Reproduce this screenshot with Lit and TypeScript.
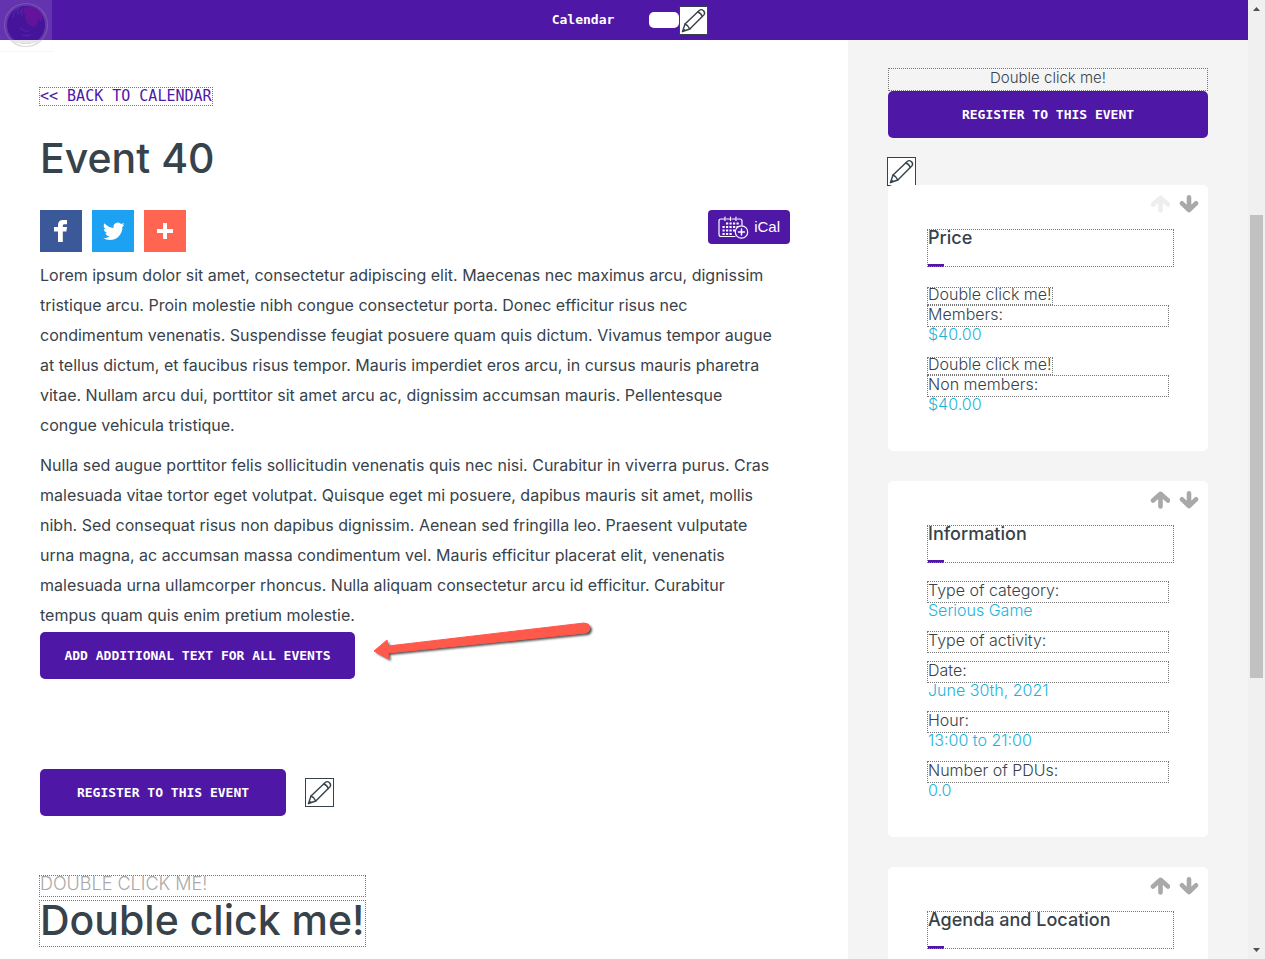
import { LitElement, html, css, svg } from "lit";
import { customElement, property } from "lit/decorators.js";

const pencil = svg`<svg viewBox="0 0 27 27" width="27" height="27" fill="none" stroke="#37424a" stroke-width="1.400" stroke-linejoin="round" stroke-linecap="round">
  <path d="M2.500 24.500L5 17L19.500 3.200Q21.300 1.800 23.500 3.700Q25.500 6 24 7.800L9.800 22Z"/>
  <path d="M5 17Q8.300 18.300 9.800 22M17.800 5Q21 6 22.300 9.500M2.500 24.500L4.500 22.700"/></svg>`;

@customElement("edit-button")
class EditButton extends LitElement {
  static styles = css`
    :host { display: block; flex: none; }
    .edit { display: grid; place-items: center; box-sizing: border-box; width: 29px; height: 29px; padding: 0; border: 1px solid #37424a; background: #fff; cursor: pointer; }
  `;
  render() {
    return html`<button class="edit" type="button" aria-label="Edit">${pencil}</button>`;
  }
}

interface Row { hint?: string; label: string; value?: string; }

@customElement("info-card")
class InfoCard extends LitElement {
  @property() heading = "";
  @property({ type: Boolean }) first = false;
  @property({ attribute: false }) rows: Row[] = [];

  static styles = css`
    :host { display: block; position: relative; background: #fff; border-radius: 5px; padding: 45px 40px 35px; }
    .moves { position: absolute; top: 10px; right: 9px; display: flex; gap: 9px; }
    .move { display: block; width: 20px; height: 18px; padding: 0; border: 0; background: none; color: #a9a9a9; }
    .move:disabled { color: #eee; }
    .title { box-sizing: border-box; height: 36px; margin: 0 -5px 20px 0; font-size: 18px; line-height: 16px; font-weight: 500; outline: 1px dotted #777; display: flex; flex-direction: column; justify-content: space-between; }
    .title::after { content: ""; width: 16px; height: 3px; background: #4e17a6; margin-bottom: -1px; }
    .rows { margin: 0; display: grid; gap: 10px; line-height: 16px; }
    .label, .value { margin: 0; padding-bottom: 4px; }
    .hint { width: max-content; margin: 2px 0; line-height: 12px; padding-bottom: 4px; outline: 1px dotted #777; }
    .entry { display: flow-root; }
    .label { outline: 1px dotted #777; }
    .value { color: #1db4da; }
  `;
  render() {
    return html`
      <div class="moves">
        <button class="move" type="button" aria-label="Move up" ?disabled=${this.first}>
          <svg viewBox="0 0 20 18" width="20" height="18" fill="none" stroke="currentColor" stroke-width="4.600" stroke-linejoin="round" stroke-linecap="round"><path d="M3 9.500L10.500 2.800L18 9.500M10.500 3.500V15.500"/></svg>
        </button>
        <button class="move" type="button" aria-label="Move down">
          <svg viewBox="0 0 20 18" width="20" height="18" fill="none" stroke="currentColor" stroke-width="4.600" stroke-linejoin="round" stroke-linecap="round"><path d="M3 8.300L10 15L17 8.300M10 14.500V2.300"/></svg>
        </button>
      </div>
      <h3 class="title">${this.heading}</h3>
      <dl class="rows">
        ${this.rows.map(r => html`<div class="entry">
          ${r.hint ? html`<dt class="hint">${r.hint}</dt>` : null}
          <dt class="label">${r.label}</dt>
          ${r.value ? html`<dd class="value">${r.value}</dd>` : null}
        </div>`)}
      </dl>`;
  }
}

@customElement("app-root")
class AppRoot extends LitElement {
  static styles = css`
    :host { display: grid; grid-template-columns: minmax(0, 1fr) 17px; height: 100vh; overflow: hidden; position: relative; font: 300 16px/20px Inter, "Liberation Sans", sans-serif; color: #37424a; background: #fff; }
    .page { display: flex; flex-direction: column; min-height: 0; overflow: hidden; }
    .bar { flex: none; height: 40px; background: #4e17a6; display: flex; align-items: center; justify-content: center; padding-left: 12px; }
    .nav { color: #fff; text-decoration: none; font: 700 13px/20px "DejaVu Sans Mono", monospace; margin-right: 35px; }
    .pill { width: 30px; height: 16px; border: 0; border-radius: 5px; background: #fff; padding: 0; }
    .logo { position: absolute; left: 0; top: 0; }
    .columns { flex: 1; min-height: 0; display: grid; grid-template-columns: minmax(0, 1fr) 400px; }
    .main { padding: 48px 58px 0 40px; min-width: 0; }
    .back { display: block; width: max-content; color: #4e17a6; text-decoration: none; font: 400 15px/17px "DejaVu Sans Mono", monospace; outline: 1px dotted #777; margin-bottom: 30px; }
    h1, h2 { font-weight: 500; font-size: 41px; line-height: 46px; margin: 0; }
    .tools { display: flex; align-items: flex-start; gap: 10px; margin: 29px 0 8px; }
    .share { width: 42px; height: 42px; padding: 0; border: 0; }
    .fb { background: #3b5998; }
    .tw { background: #1da1f2; }
    .more { background: #ff6550; }
    .ical { margin-left: auto; height: 34px; display: flex; align-items: center; gap: 5px; padding: 0 10px; border: 0; border-radius: 4px; background: #4e17a6; color: #fff; font: 400 15px/20px "Liberation Sans", sans-serif; }
    .text { font-weight: 400; line-height: 30px; margin: 0 0 10px; white-space: nowrap; }
    .text.last { margin-bottom: 2px; }
    .cta { display: block; height: 47px; border: 0; border-radius: 5px; background: #4e17a6; color: #fff; font: 700 13px/20px "DejaVu Sans Mono", monospace; padding: 0; }
    .wide { width: 315px; }
    .mid { width: 246px; }
    .full { width: 100%; }
    .register { display: flex; align-items: center; gap: 19px; margin: 90px 0 60px; }
    .heading { width: max-content; }
    .eyebrow { margin: 0 0 5px; color: #a9a9a9; font-size: 18px; line-height: 16px; padding-bottom: 4px; outline: 1px dotted #777; }
    .heading h2 { line-height: 38px; padding-bottom: 7px; outline: 1px dotted #777; }
    .side { background: #f4f4f4; padding: 28px 40px 0; overflow: hidden; }
    .note { box-sizing: border-box; height: 23px; border: 1px dotted #777; line-height: 18px; margin: 0; text-align: center; font-size: 15px; }
    .side edit-button { margin: 19px 0 -1px -1px; }
    .cards { display: grid; gap: 30px; }
    .scroll { background: #f0f0f0; display: flex; flex-direction: column; align-items: center; }
    .track { flex: 1; display: flex; flex-direction: column; }
    .before { flex: 198; }
    .thumb { flex: 463; width: 13px; background: #c1c1c1; }
    .after { flex: 264; }
    .arrow { position: absolute; left: 366px; top: 612px; }
    .shade { filter: blur(1px); }
  `;

  prices: Row[] = [
    { hint: "Double click me!", label: "Members:", value: "$40.00" },
    { hint: "Double click me!", label: "Non members:", value: "$40.00" },
  ];
  info: Row[] = [
    { label: "Type of category:", value: "Serious Game" },
    { label: "Type of activity:" },
    { label: "Date:", value: "June 30th, 2021" },
    { label: "Hour:", value: "13:00 to 21:00" },
    { label: "Number of PDUs:", value: "0.0" },
  ];

  render() {
    return html`
      <div class="page">
        <header class="bar">
          <a class="nav" href="#">Calendar</a>
          <button class="pill" type="button" aria-label="Menu item"></button>
          <edit-button></edit-button>
        </header>
        <div class="columns">
          <main class="main">
            <a class="back" href="#">&lt;&lt; BACK TO CALENDAR</a>
            <h1>Event 40</h1>
            <div class="tools">
              <button class="share fb" type="button" aria-label="Facebook">
                <svg viewBox="0 0 42 42" width="42" height="42" fill="#fff"><path d="M18 32V21.5h-4V17h4v-2.2C18 11.500 20 10 23 10h4v4.300h-2.500c-1.200 0-1.700.6-1.700 1.700v1h4.200l-.6 4.500h-3.600V32z"/></svg>
              </button>
              <button class="share tw" type="button" aria-label="Twitter">
                <svg viewBox="0 0 42 42" width="42" height="42"><path fill="#fff" transform="translate(11 10.500) scale(.9)" d="M23.950 4.570a10 10 0 0 1-2.820.770 4.960 4.960 0 0 0 2.160-2.720c-.95.550-2 .95-3.130 1.180a4.920 4.920 0 0 0-8.380 4.480C7.690 8.090 4.070 6.130 1.640 3.160a4.920 4.920 0 0 0 1.520 6.570 4.900 4.900 0 0 1-2.230-.61v.06c0 2.390 1.690 4.380 3.940 4.830a5 5 0 0 1-2.210.08 4.940 4.940 0 0 0 4.600 3.420A9.870 9.870 0 0 1 0 19.540a13.990 13.990 0 0 0 7.550 2.210c9.050 0 14-7.500 14-13.980l-.02-.64a10 10 0 0 0 2.420-2.560z"/></svg>
              </button>
              <button class="share more" type="button" aria-label="More">
                <svg viewBox="0 0 42 42" width="42" height="42" fill="#fff"><path d="M19 13h4v6h6v4h-6v6h-4v-6h-6v-4h6z"/></svg>
              </button>
              <button class="ical" type="button">
                <svg viewBox="0 0 31 23" width="31" height="23" fill="none" stroke="#fff" stroke-width="1.2" stroke-linecap="round">
                  <path d="M17 20.500H3Q1 20.500 1 18.500V5Q1 3 3 3H6M8.500 3H11.500M14 3H17M19.500 3H22Q24 3 24 5V9M7 1V4.500M12.500 1V4.500M18 1V4.500"/>
                  <path stroke-width="2.200" stroke-linecap="butt" stroke-dasharray="2.200 1.300" d="M8 7.500H21M4.500 11H20M4.500 14.500H17M4.500 18H14"/>
                  <circle cx="23.500" cy="16" r="6.200"/><path stroke-width="1.500" d="M20.500 16h6M23.500 13v6"/>
                </svg>
                <span>iCal</span>
              </button>
            </div>
            <p class="text">Lorem ipsum dolor sit amet, consectetur adipiscing elit. Maecenas nec maximus arcu, dignissim<br>tristique arcu. Proin molestie nibh congue consectetur porta. Donec efficitur risus nec<br>condimentum venenatis. Suspendisse feugiat posuere quam quis dictum. Vivamus tempor augue<br>at tellus dictum, et faucibus risus tempor. Mauris imperdiet eros arcu, in cursus mauris pharetra<br>vitae. Nullam arcu dui, porttitor sit amet arcu ac, dignissim accumsan mauris. Pellentesque<br>congue vehicula tristique.</p>
            <p class="text last">Nulla sed augue porttitor felis sollicitudin venenatis quis nec nisi. Curabitur in viverra purus. Cras<br>malesuada vitae tortor eget volutpat. Quisque eget mi posuere, dapibus mauris sit amet, mollis<br>nibh. Sed consequat risus non dapibus dignissim. Aenean sed fringilla leo. Praesent vulputate<br>urna magna, ac accumsan massa condimentum vel. Mauris efficitur placerat elit, venenatis<br>malesuada urna ullamcorper rhoncus. Nulla aliquam consectetur arcu id efficitur. Curabitur<br>tempus quam quis enim pretium molestie.</p>
            <button class="cta wide" type="button">ADD ADDITIONAL TEXT FOR ALL EVENTS</button>
            <div class="register">
              <button class="cta mid" type="button">REGISTER TO THIS EVENT</button>
              <edit-button></edit-button>
            </div>
            <div class="heading">
              <p class="eyebrow">DOUBLE CLICK ME!</p>
              <h2>Double click me!</h2>
            </div>
          </main>
          <aside class="side">
            <p class="note">Double click me!</p>
            <button class="cta full" type="button">REGISTER TO THIS EVENT</button>
            <edit-button></edit-button>
            <div class="cards">
              <info-card heading="Price" first .rows=${this.prices}></info-card>
              <info-card heading="Information" .rows=${this.info}></info-card>
              <info-card heading="Agenda and Location"></info-card>
            </div>
          </aside>
        </div>
      </div>
      <div class="scroll">
        <svg viewBox="0 0 17 17" width="17" height="17" fill="#505050"><path d="M5 11L8.500 7L12 11z"/></svg>
        <div class="track"><div class="before"></div><div class="thumb"></div><div class="after"></div></div>
        <svg viewBox="0 0 17 17" width="17" height="17" fill="#505050"><path d="M5 6L8.500 10L12 6z"/></svg>
      </div>
      <svg class="logo" viewBox="0 0 52 52" width="52" height="52">
        <rect width="52" height="51" fill="#fff" opacity=".12"/>
        <path d="M0 51.500H52V40" fill="none" stroke="#f6f6f6"/>
        <circle cx="26" cy="25" r="21.500" fill="none" stroke="#999" stroke-width="1.200" opacity=".35"/>
        <circle cx="26" cy="25" r="19" fill="#45149a"/>
        <path d="M10 40H42Q36 44 26 44Q16 44 10 40" fill="#e6e6e6"/>
        <path d="M25 7Q37 4 42.500 16Q43 19 41 22L38 19L37 24Q35 28 31 26Q25 23 25 15Q22 11 25 7" fill="#64149b"/>
        <path d="M13 18Q13 10 20 7.500Q16 12 18 14Q20 13 23 8Q21 12 22 16M20 28Q25 32 29 31M22 35Q27 37 31 34" fill="none" stroke="#5522a4" stroke-width="1.200"/>
      </svg>
      <svg class="arrow" viewBox="0 0 236 60" width="236" height="60">
        <path class="shade" d="M10 41L23 30L24 36L220 13Q225 13 226 17Q226 22 222 23L24 43L25 49Z" fill="#222" opacity=".8"/>
        <path d="M8 39L21 28L22 34L218 11Q223 11 224 15Q224 20 220 21L22 41L23 47Z" fill="#ff594b" stroke="#ff594b" stroke-width="1" stroke-linejoin="round"/>
      </svg>`;
  }
}
